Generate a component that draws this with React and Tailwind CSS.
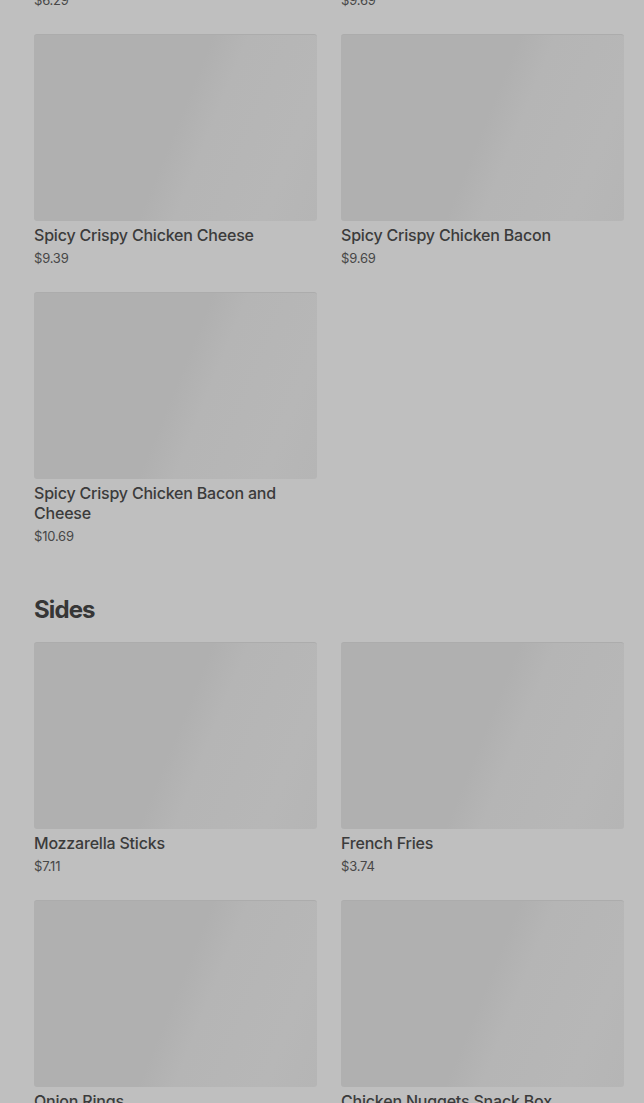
import React from 'react';

const sections = [
  {
    title: null,
    items: [
      { name: 'Spicy Crispy Chicken', price: '$6.29' },
      { name: 'Spicy Crispy Chicken Deluxe', price: '$9.69' },
      { name: 'Spicy Crispy Chicken Cheese', price: '$9.39' },
      { name: 'Spicy Crispy Chicken Bacon', price: '$9.69' },
      { name: 'Spicy Crispy Chicken Bacon and Cheese', price: '$10.69' },
    ],
  },
  {
    title: 'Sides',
    items: [
      { name: 'Mozzarella Sticks', price: '$7.11' },
      { name: 'French Fries', price: '$3.74' },
      { name: 'Onion Rings', price: '$4.29' },
      { name: 'Chicken Nuggets Snack Box', price: '$5.49' },
    ],
  },
];

function ItemCard({ item }) {
  return (
    <div className="flex flex-col">
      <div className="h-[187px] rounded-[3px] border-t border-[#acacac] bg-[linear-gradient(112deg,#b0b0b0_0%,#b0b0b0_50%,#b5b5b5_60%,#b7b7b7_85%,#b5b5b5_100%)]" />
      <div className="mt-1 text-[16px] leading-5 font-medium tracking-[-0.2px] text-[#3b3b3b]">{item.name}</div>
      <div className="mt-[3px] text-[13px] leading-5 tracking-[-0.2px] text-[#474747]">{item.price}</div>
    </div>
  );
}

export default function App() {
  return (
    <div className="h-[1103px] overflow-hidden bg-[#bfbfbf] font-['Inter',sans-serif]">
      <div className="-mt-[224px] pl-[34px] pr-[20px]">
        {sections.map((section, i) => (
          <div key={i} className={i > 0 ? 'mt-[48px]' : ''}>
            {section.title && (
              <h2 className="mb-[16px] text-[24px] leading-8 font-bold tracking-[-0.9px] text-[#363636]">{section.title}</h2>
            )}
            <div className="grid grid-cols-2 gap-x-6 gap-y-6">
              {section.items.map(item => (
                <ItemCard key={item.name} item={item} />
              ))}
            </div>
          </div>
        ))}
      </div>
    </div>
  );
}
